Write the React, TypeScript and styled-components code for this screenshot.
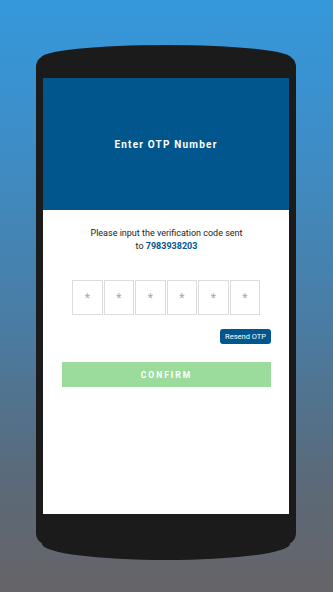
import * as React from "react";
import styled, { createGlobalStyle } from "styled-components";

const GlobalStyle = createGlobalStyle`
  html, body {
    margin: 0;
    padding: 0;
  }
  body {
    font-family: Roboto, "Liberation Sans", Arial, sans-serif;
  }
`;

const Page = styled.div`
  width: 333px;
  height: 592px;
  background: linear-gradient(
    180deg,
    #3598dc 0%,
    #3e8dc6 25%,
    #4a7ca3 55%,
    #5a6a7a 80%,
    #666468 100%
  );
  padding: 55px 0 0 36px;
  box-sizing: border-box;
  overflow: hidden;
`;

// phone frame: straight body plus two shallow arcs for the top and bottom bezels
const PhoneBody = styled.div`
  position: relative;
  width: 260px;
  height: 490px;
  background: #1b1b1b;
  border-radius: 12px;
  padding: 23px 7px 31px;
  box-sizing: border-box;
  display: flex;

  &::before,
  &::after {
    content: "";
    position: absolute;
    background: #1b1b1b;
    border-radius: 50%;
  }
  &::before {
    top: -10px;
    left: 5px;
    right: 5px;
    height: 26px;
  }
  &::after {
    bottom: -15px;
    left: 6px;
    right: 6px;
    height: 32px;
  }
`;

const Screen = styled.div`
  position: relative;
  z-index: 1;
  flex: 1;
  background: #ffffff;
  display: flex;
  flex-direction: column;
`;

const Header = styled.div`
  height: 132px;
  background: #02568e;
  display: flex;
  align-items: center;
  justify-content: center;
`;

const Title = styled.h1`
  margin: 0;
  color: #ffffff;
  font-size: 10px;
  font-weight: 700;
  letter-spacing: 1.2px;
`;

const Content = styled.div`
  padding: 17px 18px 0 19px;
  display: flex;
  flex-direction: column;
`;

const Message = styled.p`
  margin: 0;
  text-align: center;
  font-size: 9px;
  line-height: 13px;
  color: #222;
`;

const Phone = styled.span`
  color: #02568e;
  font-weight: 700;
`;

const OtpRow = styled.div`
  display: flex;
  justify-content: center;
  gap: 1px;
  margin-top: 27px;
  padding-right: 1px;
`;

const OtpBox = styled.div`
  width: 28.5px;
  height: 33px;
  border: 1px solid #dcdcdc;
  display: flex;
  align-items: center;
  justify-content: center;
  color: #a8a8a8;
  font-size: 12px;
`;

const ResendRow = styled.div`
  display: flex;
  justify-content: flex-end;
  margin-top: 14px;
`;

const ResendButton = styled.button`
  border: none;
  background: #02568e;
  color: #ffffff;
  font-family: inherit;
  font-size: 7.5px;
  height: 15px;
  padding: 0 5px;
  border-radius: 3px;
`;

const ConfirmButton = styled.button`
  margin-top: 18px;
  height: 25px;
  border: none;
  background: #9bdc9c;
  color: #ffffff;
  font-family: inherit;
  font-size: 8.5px;
  font-weight: 700;
  letter-spacing: 2px;
`;

const App = () => {
  const digits = ["*", "*", "*", "*", "*", "*"];
  return (
    <>
      <GlobalStyle />
      <Page>
        <PhoneBody>
          <Screen>
            <Header>
              <Title>Enter OTP Number</Title>
            </Header>
            <Content>
              <Message>
                Please input the verification code sent
                <br />
                to <Phone>7983938203</Phone>
              </Message>
              <OtpRow>
                {digits.map((d, i) => (
                  <OtpBox key={i}>{d}</OtpBox>
                ))}
              </OtpRow>
              <ResendRow>
                <ResendButton>Resend OTP</ResendButton>
              </ResendRow>
              <ConfirmButton>CONFIRM</ConfirmButton>
            </Content>
          </Screen>
        </PhoneBody>
      </Page>
    </>
  );
};

export default App;
